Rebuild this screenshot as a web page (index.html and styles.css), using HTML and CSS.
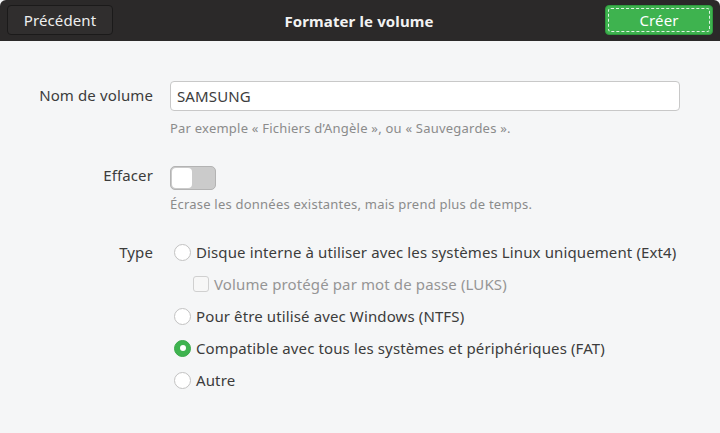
FILE: index.html
```html
<!DOCTYPE html>
<html lang="fr">
<head>
    <meta charset="UTF-8">
    <meta name="viewport" content="width=device-width, initial-scale=1.0">
    <title>Formater le volume</title>
    <link rel="stylesheet" href="styles.css">
</head>
<body>
    <header class="headerbar">
        <button class="btn btn-back">Précédent</button>
        <h1 class="title">Formater le volume</h1>
        <button class="btn btn-create"><span class="focus">Créer</span></button>
    </header>

    <main class="form">
        <label class="label label-entry" for="name">Nom de volume</label>
        <div class="field">
            <input class="entry" id="name" type="text" value="SAMSUNG">
            <p class="hint">Par exemple « Fichiers d’Angèle », ou « Sauvegardes ».</p>
        </div>

        <div class="label label-switch">Effacer</div>
        <div class="field">
            <span class="switch"><span class="knob"></span></span>
            <p class="hint hint-switch">Écrase les données existantes, mais prend plus de temps.</p>
        </div>

        <div class="label label-type">Type</div>
        <div class="field options">
            <div class="option"><span class="radio"></span>Disque interne à utiliser avec les systèmes Linux uniquement (Ext4)</div>
            <div class="option sub disabled"><span class="check"></span>Volume protégé par mot de passe (LUKS)</div>
            <div class="option"><span class="radio"></span>Pour être utilisé avec Windows (NTFS)</div>
            <div class="option"><span class="radio checked"></span>Compatible avec tous les systèmes et périphériques (FAT)</div>
            <div class="option"><span class="radio"></span>Autre</div>
        </div>
    </main>
</body>
</html>
```

FILE: styles.css
```css
html {
    background: #ffffff;
}
body {
    margin: 0;
    font-family: "Noto Sans", "DejaVu Sans", sans-serif;
    font-size: 15px;
    letter-spacing: 0.12px;
    color: #3c3c3c;
    background: #f5f6f7;
    height: 433px;
    overflow: hidden;
}
.headerbar {
    height: 41px;
    background: #2b2929;
    border-radius: 6px 6px 0 0;
    display: flex;
    align-items: center;
    padding: 0 7px;
    box-sizing: border-box;
}
.title {
    flex: 1;
    margin: 0;
    text-align: center;
    font-size: 15px;
    font-weight: bold;
    color: #f2f2f2;
}
.btn {
    font-family: inherit;
    font-size: 15px;
    letter-spacing: inherit;
    height: 30px;
    border-radius: 4px;
    padding: 0;
    margin-top: -1px;
}
.btn-back {
    width: 106px;
    background: #302e2e;
    border: 1px solid #1b1a1a;
    color: #eeeeee;
}
.btn-create {
    width: 108px;
    background: #3eb34f;
    border: 1px solid #2f9a3e;
    color: #ffffff;
    padding: 2px;
}
.btn-create .focus {
    display: flex;
    align-items: center;
    justify-content: center;
    height: 100%;
    border: 1px dashed rgba(255, 255, 255, 0.85);
    border-radius: 3px;
    box-sizing: border-box;
}
.form {
    display: grid;
    grid-template-columns: 153px 1fr;
    column-gap: 17px;
    padding: 40px 40px 0 0;
}
.label {
    text-align: right;
}
.label-entry {
    padding-top: 4px;
}
.label-switch {
    padding-top: 28px;
}
.label-type {
    padding-top: 29px;
}
.field {
    display: flex;
    flex-direction: column;
    align-items: flex-start;
}
.entry {
    box-sizing: border-box;
    width: 100%;
    height: 30px;
    border: 1px solid #c8c8c8;
    border-radius: 4px;
    background: #ffffff;
    font-family: inherit;
    font-size: 15px;
    letter-spacing: inherit;
    color: #3c3c3c;
    padding: 0 6px;
    outline: none;
}
.hint {
    margin: 8px 0 0;
    font-size: 13px;
    letter-spacing: 0.22px;
    color: #8b8b8b;
}
.hint-switch {
    margin-top: 5px;
}
.switch {
    margin-top: 29px;
    width: 46px;
    height: 24px;
    box-sizing: border-box;
    border: 1px solid #b3b3b3;
    border-radius: 5px;
    background: #cbcbcb;
    display: flex;
    align-items: center;
    padding: 1px;
}
.knob {
    width: 20px;
    height: 20px;
    background: #ffffff;
    border-radius: 4px;
}
.options {
    padding-top: 29px;
    gap: 12px;
}
.option {
    display: flex;
    align-items: center;
    height: 20px;
    gap: 5px;
}
.option.sub {
    padding-left: 23px;
}
.option.disabled {
    color: #959595;
}
.radio {
    width: 17px;
    height: 17px;
    margin-left: 4px;
    box-sizing: border-box;
    border: 1px solid #c2c2c2;
    border-radius: 50%;
    background: #ffffff;
}
.radio.checked {
    background: #3eb34f;
    border-color: #3aa94a;
    display: flex;
    align-items: center;
    justify-content: center;
}
.radio.checked::after {
    content: "";
    width: 6px;
    height: 6px;
    border-radius: 50%;
    background: #ffffff;
}
.check {
    width: 16px;
    height: 16px;
    box-sizing: border-box;
    border: 1px solid #d0d0d0;
    border-radius: 3px;
    background: #f7f7f7;
}
```
